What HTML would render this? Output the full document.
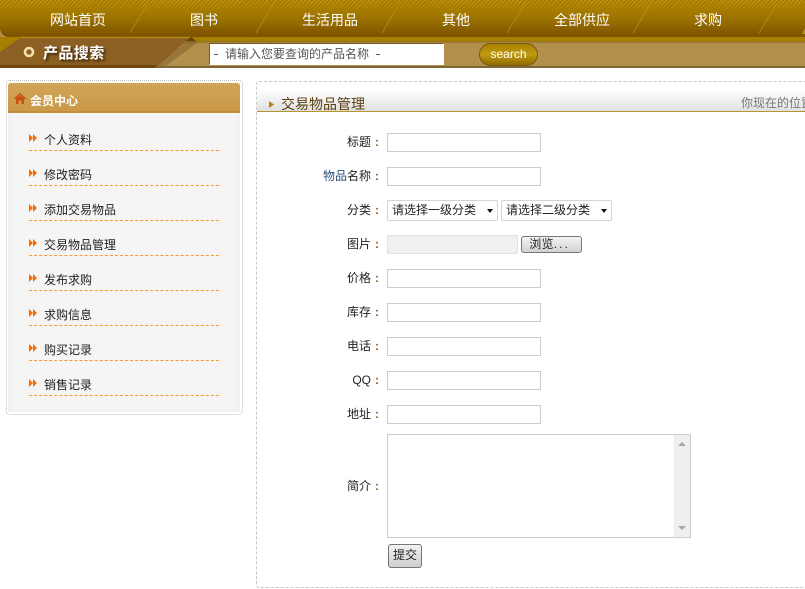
<!DOCTYPE html>
<html lang="zh-CN">
<head>
<meta charset="utf-8">
<title>交易物品管理</title>
<style>
*{box-sizing:border-box}
html,body{margin:0;padding:0;width:805px;height:589px;overflow:hidden;background:#fff;font-family:"Liberation Sans","Noto Sans CJK SC",sans-serif;font-size:12px;color:#222}
.abs{position:absolute}
#top{position:absolute;left:0;top:0;width:805px;height:68px;overflow:hidden;background:#b09048}
#bar2{position:absolute;left:0;top:37px;width:805px;height:4px;background:#a87e00}
#bar3{position:absolute;left:0;top:41px;width:805px;height:25px;background:linear-gradient(#8f7020 0,#b3914c 3px,#b3914c 100%)}
#bar4{position:absolute;left:0;top:66px;width:805px;height:2px;background:#806634}
#nav{position:absolute;left:0;top:0;width:805px;height:37px;background:linear-gradient(#b58c05 0,#a87d00 9px,#9a7000 20px,#7d5200 36px);border-bottom-left-radius:9px}
#hatch{position:absolute;left:0;top:0;width:805px;height:10px;background:repeating-linear-gradient(135deg,rgba(220,180,30,.45) 0 1px,rgba(120,85,0,.3) 1px 3px);-webkit-mask-image:linear-gradient(#000,transparent);mask-image:linear-gradient(#000,transparent)}
.nt{position:absolute;top:10px;color:#fff;font-size:14px;line-height:20px;white-space:nowrap}
#s{position:absolute;left:209px;top:43px;width:235px;height:22px;background:#fff;border:1px solid #7c5a20;border-right:1px solid #fff;border-bottom:1px solid #fff;color:#555}
#s span{position:absolute;top:1px;font-size:12px;line-height:19px;white-space:nowrap}
#s b{position:absolute;top:10px;width:4px;height:1px;background:#555}
#btn{position:absolute;left:479px;top:43px;width:59px;height:23px;border-radius:12px;border:1px solid #7a5a18;background:linear-gradient(#a88000,#c09a10 50%,#8f6c00);color:#fff;font-size:12px;line-height:21px;text-align:center}
#ptitle{position:absolute;left:43px;top:44px;color:#fff;font-size:15px;font-weight:bold;line-height:20px;letter-spacing:.4px;text-shadow:2px 2px 2px #3c2808;white-space:nowrap}
#side{position:absolute;left:6px;top:80px;width:237px;height:335px;border:1px dotted #bbb;border-radius:4px}
#sideinner{position:absolute;left:1px;top:2px;width:232px;height:329px;background:#f5f5f5;box-shadow:inset 0 0 6px #ebebeb}
#shead{position:absolute;left:0;top:0;width:232px;height:30px;background:linear-gradient(#d2a458,#c99a48);border-bottom:2px solid #c28f38;border-radius:3px 3px 0 0}
#shead b{position:absolute;left:22px;top:9px;color:#fff;font-size:12px;line-height:18px}
.li{position:absolute;left:29px;width:190px;height:22px;border-bottom:1px dashed #fa9a2a}
.li span{position:absolute;left:15px;top:3px;font-size:12px;line-height:17px;color:#222;white-space:nowrap}
.li svg{position:absolute;left:0;top:4px}
#main{position:absolute;left:256px;top:81px;width:570px;height:507px;border:1px dashed #c8c8c8;border-radius:3px}
#mh{position:absolute;left:0;top:8px;width:570px;height:22px;background:linear-gradient(#fff,#e0e0e0);border-bottom:1px solid #b8962a}
#mh .t{position:absolute;left:24px;top:5px;font-size:14px;line-height:19px;color:#5a3d10;white-space:nowrap}
#mh .r{position:absolute;left:484px;top:4px;font-size:12px;line-height:18px;color:#777;white-space:nowrap}
.lb{position:absolute;width:125px;left:257px;text-align:right;font-size:12px;line-height:18px;color:#222;white-space:nowrap}
.lb i{font-style:normal;color:#8a5a10;font-weight:bold;display:inline-block;width:11px;text-align:right;padding-right:3px}
.in{position:absolute;left:387px;width:154px;height:19px;border:1px solid #ccc;background:#fff}
.sel{position:absolute;top:200px;width:111px;height:21px;border:1px solid #d4d4dc;border-radius:2px;background:#fff;font-size:12px;line-height:19px;color:#222;padding-left:4px;white-space:nowrap}
.sel:after{content:"";position:absolute;right:4px;top:8px;border-left:3.5px solid transparent;border-right:3.5px solid transparent;border-top:4px solid #111}
</style>
</head>
<body>
<div id="top">
  <div id="bar2"></div>
  <div id="bar3"></div>
  <div id="bar4"></div>
  <div id="nav"><div id="hatch"></div></div>
  <svg class="abs" style="left:0;top:0" width="805" height="68">
    <g stroke="#b8921f" stroke-width=".8" opacity=".85">
      <path d="M130 33L148 3M256 33L274 3M382 33L400 3M507 33L525 3M633 33L651 3M759 33L777 3"/>
    </g>
    <path d="M0 37H20V42L0 52Z" fill="#a87e00"/>
    <path d="M0 52L20 38H190L155 68H0Z" fill="#8c5f22"/>
    <path d="M0 65H157L154 68H0Z" fill="#6e4410"/>
    <path d="M20 37.500H190" stroke="#b08a10" stroke-width="1.500"/>
    <path d="M186 41L191 37L196 41Z" fill="#5e3c08"/>
    <path d="M191 39L198 42L166 66H155Z" fill="#6e5020" opacity=".4"/>
    <path d="M802 34L805 28V34Z" fill="#b8921f"/>
    <circle cx="29" cy="52" r="4" fill="none" stroke="#f2dfae" stroke-width="2.600"/>
  </svg>
  <div class="nt" style="left:50px">网站首页</div>
  <div class="nt" style="left:190px">图书</div>
  <div class="nt" style="left:302px">生活用品</div>
  <div class="nt" style="left:442px">其他</div>
  <div class="nt" style="left:554px">全部供应</div>
  <div class="nt" style="left:694px">求购</div>
  <div id="ptitle">产品搜索</div>
  <div id="s"><b style="left:4px"></b><span style="left:15px">请输入您要查询的产品名称</span><b style="left:166px"></b></div>
  <div id="btn">search</div>
</div>

<div id="side">
  <div id="sideinner">
    <div id="shead">
      <svg class="abs" style="left:6px;top:10px" width="12" height="11" viewBox="0 0 12 11"><path d="M0.500 6L6 0.800L11.500 6" fill="none" stroke="#c9500e" stroke-width="1.400"/><path d="M2 5.500L6 2.200L10 5.500V11H7.500V7.500H4.500V11H2Z" fill="#c9500e"/></svg>
      <b>会员中心</b>
    </div>
  </div>
</div>
<div class="li" style="top:129px"><svg width="9" height="10" viewBox="0 0 9 10"><path d="M0 1L4 5L0 9ZM4 1L8 5L4 9Z" fill="#fa6a00"/></svg><span>个人资料</span></div>
<div class="li" style="top:164px"><svg width="9" height="10" viewBox="0 0 9 10"><path d="M0 1L4 5L0 9ZM4 1L8 5L4 9Z" fill="#fa6a00"/></svg><span>修改密码</span></div>
<div class="li" style="top:199px"><svg width="9" height="10" viewBox="0 0 9 10"><path d="M0 1L4 5L0 9ZM4 1L8 5L4 9Z" fill="#fa6a00"/></svg><span>添加交易物品</span></div>
<div class="li" style="top:234px"><svg width="9" height="10" viewBox="0 0 9 10"><path d="M0 1L4 5L0 9ZM4 1L8 5L4 9Z" fill="#fa6a00"/></svg><span>交易物品管理</span></div>
<div class="li" style="top:269px"><svg width="9" height="10" viewBox="0 0 9 10"><path d="M0 1L4 5L0 9ZM4 1L8 5L4 9Z" fill="#fa6a00"/></svg><span>发布求购</span></div>
<div class="li" style="top:304px"><svg width="9" height="10" viewBox="0 0 9 10"><path d="M0 1L4 5L0 9ZM4 1L8 5L4 9Z" fill="#fa6a00"/></svg><span>求购信息</span></div>
<div class="li" style="top:339px"><svg width="9" height="10" viewBox="0 0 9 10"><path d="M0 1L4 5L0 9ZM4 1L8 5L4 9Z" fill="#fa6a00"/></svg><span>购买记录</span></div>
<div class="li" style="top:374px"><svg width="9" height="10" viewBox="0 0 9 10"><path d="M0 1L4 5L0 9ZM4 1L8 5L4 9Z" fill="#fa6a00"/></svg><span>销售记录</span></div>

<div id="main">
  <div id="mh">
    <svg class="abs" style="left:12px;top:11px" width="6" height="7" viewBox="0 0 6 7"><path d="M0 0L5 3.500L0 7Z" fill="#b8860b"/></svg>
    <div class="t">交易物品管理</div>
    <div class="r">你现在的位置</div>
  </div>
</div>

<div class="lb" style="top:133px">标题<i>:</i></div>
<div class="in" style="top:133px"></div>
<div class="lb" style="top:167px"><span style="color:#2a4f78">物品</span>名称<i>:</i></div>
<div class="in" style="top:167px"></div>
<div class="lb" style="top:201px">分类<i>:</i></div>
<div class="sel" style="left:387px">请选择一级分类</div>
<div class="sel" style="left:501px">请选择二级分类</div>
<div class="lb" style="top:235px">图片<i>:</i></div>
<div class="abs" style="left:387px;top:235px;width:131px;height:19px;background:#f0f0f0;border:1px solid #e2e2e2"></div>
<div class="abs" style="left:521px;top:236px;width:61px;height:17px;border:1px solid #777;border-radius:3px;background:linear-gradient(#f4f4f4,#d2d2d2);font-size:12px;line-height:15px;text-align:center;color:#222;white-space:nowrap;letter-spacing:.3px;padding-right:4px">浏览<span style="letter-spacing:2px">...</span></div>
<div class="lb" style="top:269px">价格<i>:</i></div>
<div class="in" style="top:269px"></div>
<div class="lb" style="top:303px">库存<i>:</i></div>
<div class="in" style="top:303px"></div>
<div class="lb" style="top:337px">电话<i>:</i></div>
<div class="in" style="top:337px"></div>
<div class="lb" style="top:371px">QQ<i>:</i></div>
<div class="in" style="top:371px"></div>
<div class="lb" style="top:405px">地址<i>:</i></div>
<div class="in" style="top:405px"></div>
<div class="lb" style="top:477px">简介<i>:</i></div>
<div class="abs" style="left:387px;top:434px;width:304px;height:104px;border:1px solid #ccc;background:#fff">
  <div class="abs" style="right:0;top:0;width:16px;height:102px;background:#efefef">
    <svg class="abs" style="left:4px;top:7px" width="8" height="5"><path d="M0 4L4 0L8 4Z" fill="#a8a8a8"/></svg>
    <svg class="abs" style="left:4px;top:91px" width="8" height="5"><path d="M0 0L4 4L8 0Z" fill="#a8a8a8"/></svg>
  </div>
</div>
<div class="abs" style="left:388px;top:544px;width:34px;height:24px;border:1px solid #777;border-radius:3px;background:linear-gradient(#f2f2f2,#cfcfcf);font-size:12px;line-height:21px;text-align:center;color:#222">提交</div>
</body>
</html>
